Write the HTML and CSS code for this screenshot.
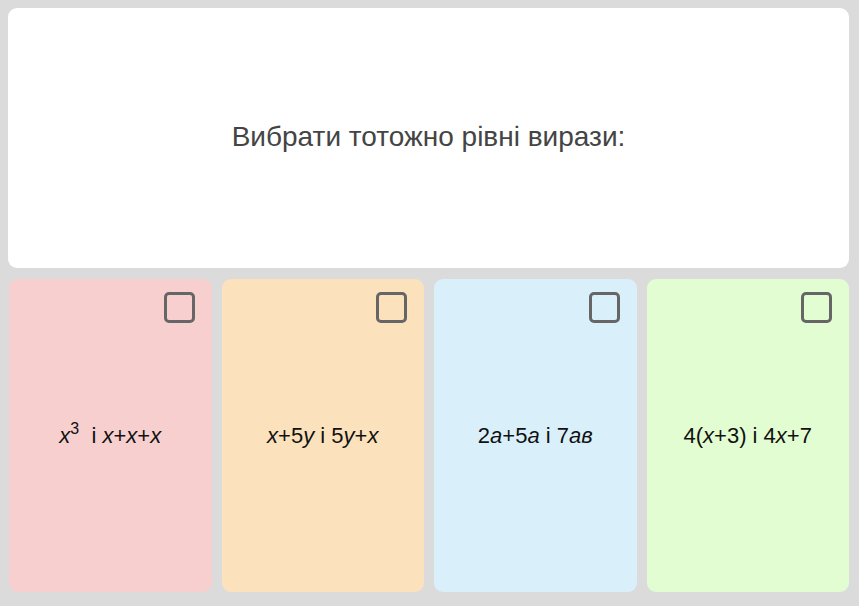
FILE: index.html
```html
<!DOCTYPE html>
<html lang="uk">
<head>
<meta charset="utf-8">
<link rel="stylesheet" href="styles.css">
</head>
<body>
<div class="page">
  <div class="question">Вибрати тотожно рівні вирази:</div>
  <div class="answers">
    <div class="card pink"><span class="box"></span><div class="expr"><i>x</i><sup>3</sup>&nbsp; і <i>x</i>+<i>x</i>+<i>x</i></div></div>
    <div class="card orange"><span class="box"></span><div class="expr"><i>x</i>+5<i>y</i> і 5<i>y</i>+<i>x</i></div></div>
    <div class="card blue"><span class="box"></span><div class="expr">2<i>a</i>+5<i>a</i> і 7<i>ав</i></div></div>
    <div class="card green"><span class="box"></span><div class="expr">4(<i>x</i>+3) і 4<i>x</i>+7</div></div>
  </div>
</div>
</body>
</html>
```
FILE: styles.css
```css
html, body { margin: 0; padding: 0; }
body {
  background: #dbdbdb;
  font-family: "Liberation Sans", Arial, sans-serif;
  width: 859px;
  height: 606px;
  overflow: hidden;
}
.page {
  padding: 8px 10px 14px 8px;
  display: flex;
  flex-direction: column;
  gap: 11px;
}
.question {
  height: 260px;
  background: #fff;
  border-radius: 9px;
  display: flex;
  align-items: center;
  justify-content: center;
  font-size: 28px;
  color: #444;
  padding-bottom: 2px;
  box-sizing: border-box;
}
.answers {
  display: flex;
  gap: 10px;
  padding-left: 1px;
}
.card {
  flex: 1;
  height: 313px;
  border-radius: 9px;
  position: relative;
  display: flex;
  align-items: center;
  justify-content: center;
}
.pink { background: #f7cfcf; }
.orange { background: #fbe2bc; }
.blue { background: #d9f0fb; }
.green { background: #e2fdd2; }
.box {
  position: absolute;
  top: 13px;
  right: 17px;
  width: 25px;
  height: 25px;
  border: 3px solid #666;
  border-radius: 5px;
}
.expr {
  font-size: 22px;
  color: #111;
  padding-top: 1px;
}
.expr sup { font-size: 16px; line-height: 0; vertical-align: 9px; }
```
